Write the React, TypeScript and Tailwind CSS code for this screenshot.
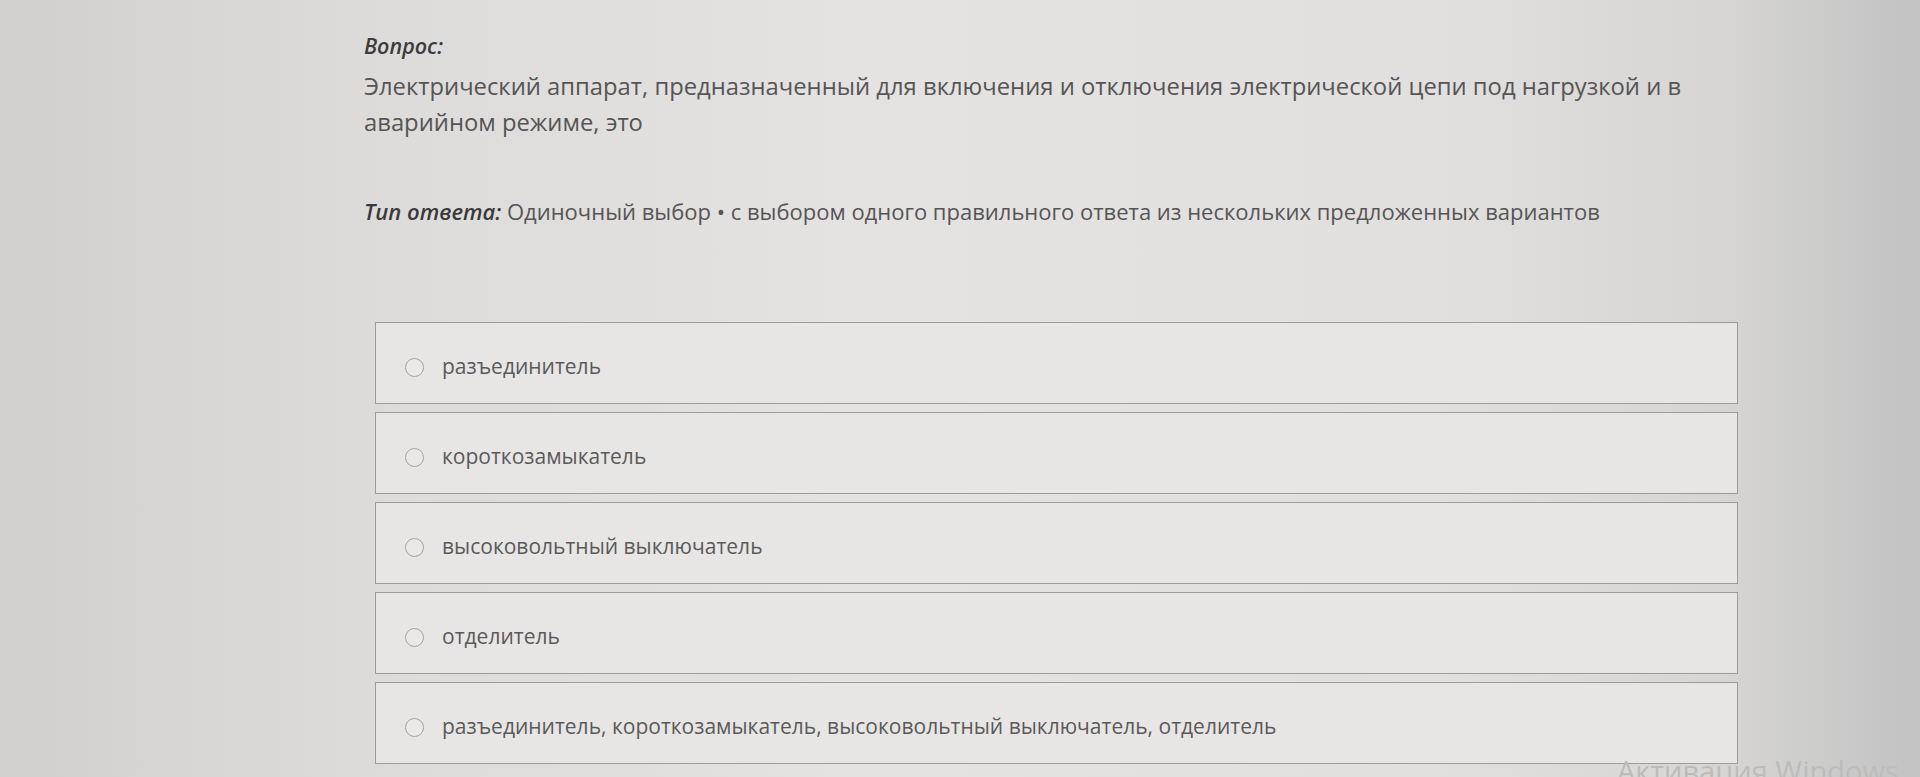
import React from 'react';

const OPTIONS = [
  "разъединитель",
  "короткозамыкатель",
  "высоковольтный выключатель",
  "отделитель",
  "разъединитель, короткозамыкатель, высоковольтный выключатель, отделитель",
];

const App = () => {
  return (
    <div
      className="relative h-[777px] w-[1920px] overflow-hidden bg-[linear-gradient(90deg,#d1d0cf_0%,#dddbda_18%,#e5e3e2_45%,#e2e0df_75%,#d6d5d4_90%,#c2c2c2_100%)] text-[#505050]"
      style={{ fontFamily: '"Open Sans", "Noto Sans", sans-serif' }}
    >
      <div className="pl-[364px] pr-[150px] pt-[33px]">
        <div className="text-[21.5px] font-semibold italic text-[#3c3c3c] leading-[26px]">Вопрос:</div>
        <p className="mt-[9px] text-[23.8px] leading-[36px] text-[#555555] max-w-[1360px]">
          Электрический аппарат, предназначенный для включения и отключения электрической цепи под нагрузкой и в
          аварийном режиме, это
        </p>

        <div className="mt-[56px] text-[22px] leading-[30px] text-[#555555]">
          <span className="font-semibold italic text-[#3a3a3a]">Тип ответа:</span>{" "}
          Одиночный выбор • с выбором одного правильного ответа из нескольких предложенных вариантов
        </div>

        <div className="mt-[96px] ml-[11px] flex w-[1363px] flex-col gap-[8px]">
          {OPTIONS.map((opt) => (
            <div
              key={opt}
              className="flex h-[82px] items-center border border-[#9c9c9c] bg-[#e8e6e5] pl-[29px] pt-[8px]"
            >
              <span className="h-[19px] w-[19px] shrink-0 rounded-full border-[1.5px] border-[#a3a3a3] bg-[#ebe9e8]" />
              <span className="ml-[18px] text-[21px] text-[#5a5a5a]">{opt}</span>
            </div>
          ))}
        </div>
      </div>

      <div
        className="absolute left-[1617px] top-[756px] text-[29px] leading-none text-[#bdbcbb]"
        style={{ fontFamily: '"Open Sans", sans-serif' }}
      >
        Активация Windows
      </div>
    </div>
  );
};

export default App;
